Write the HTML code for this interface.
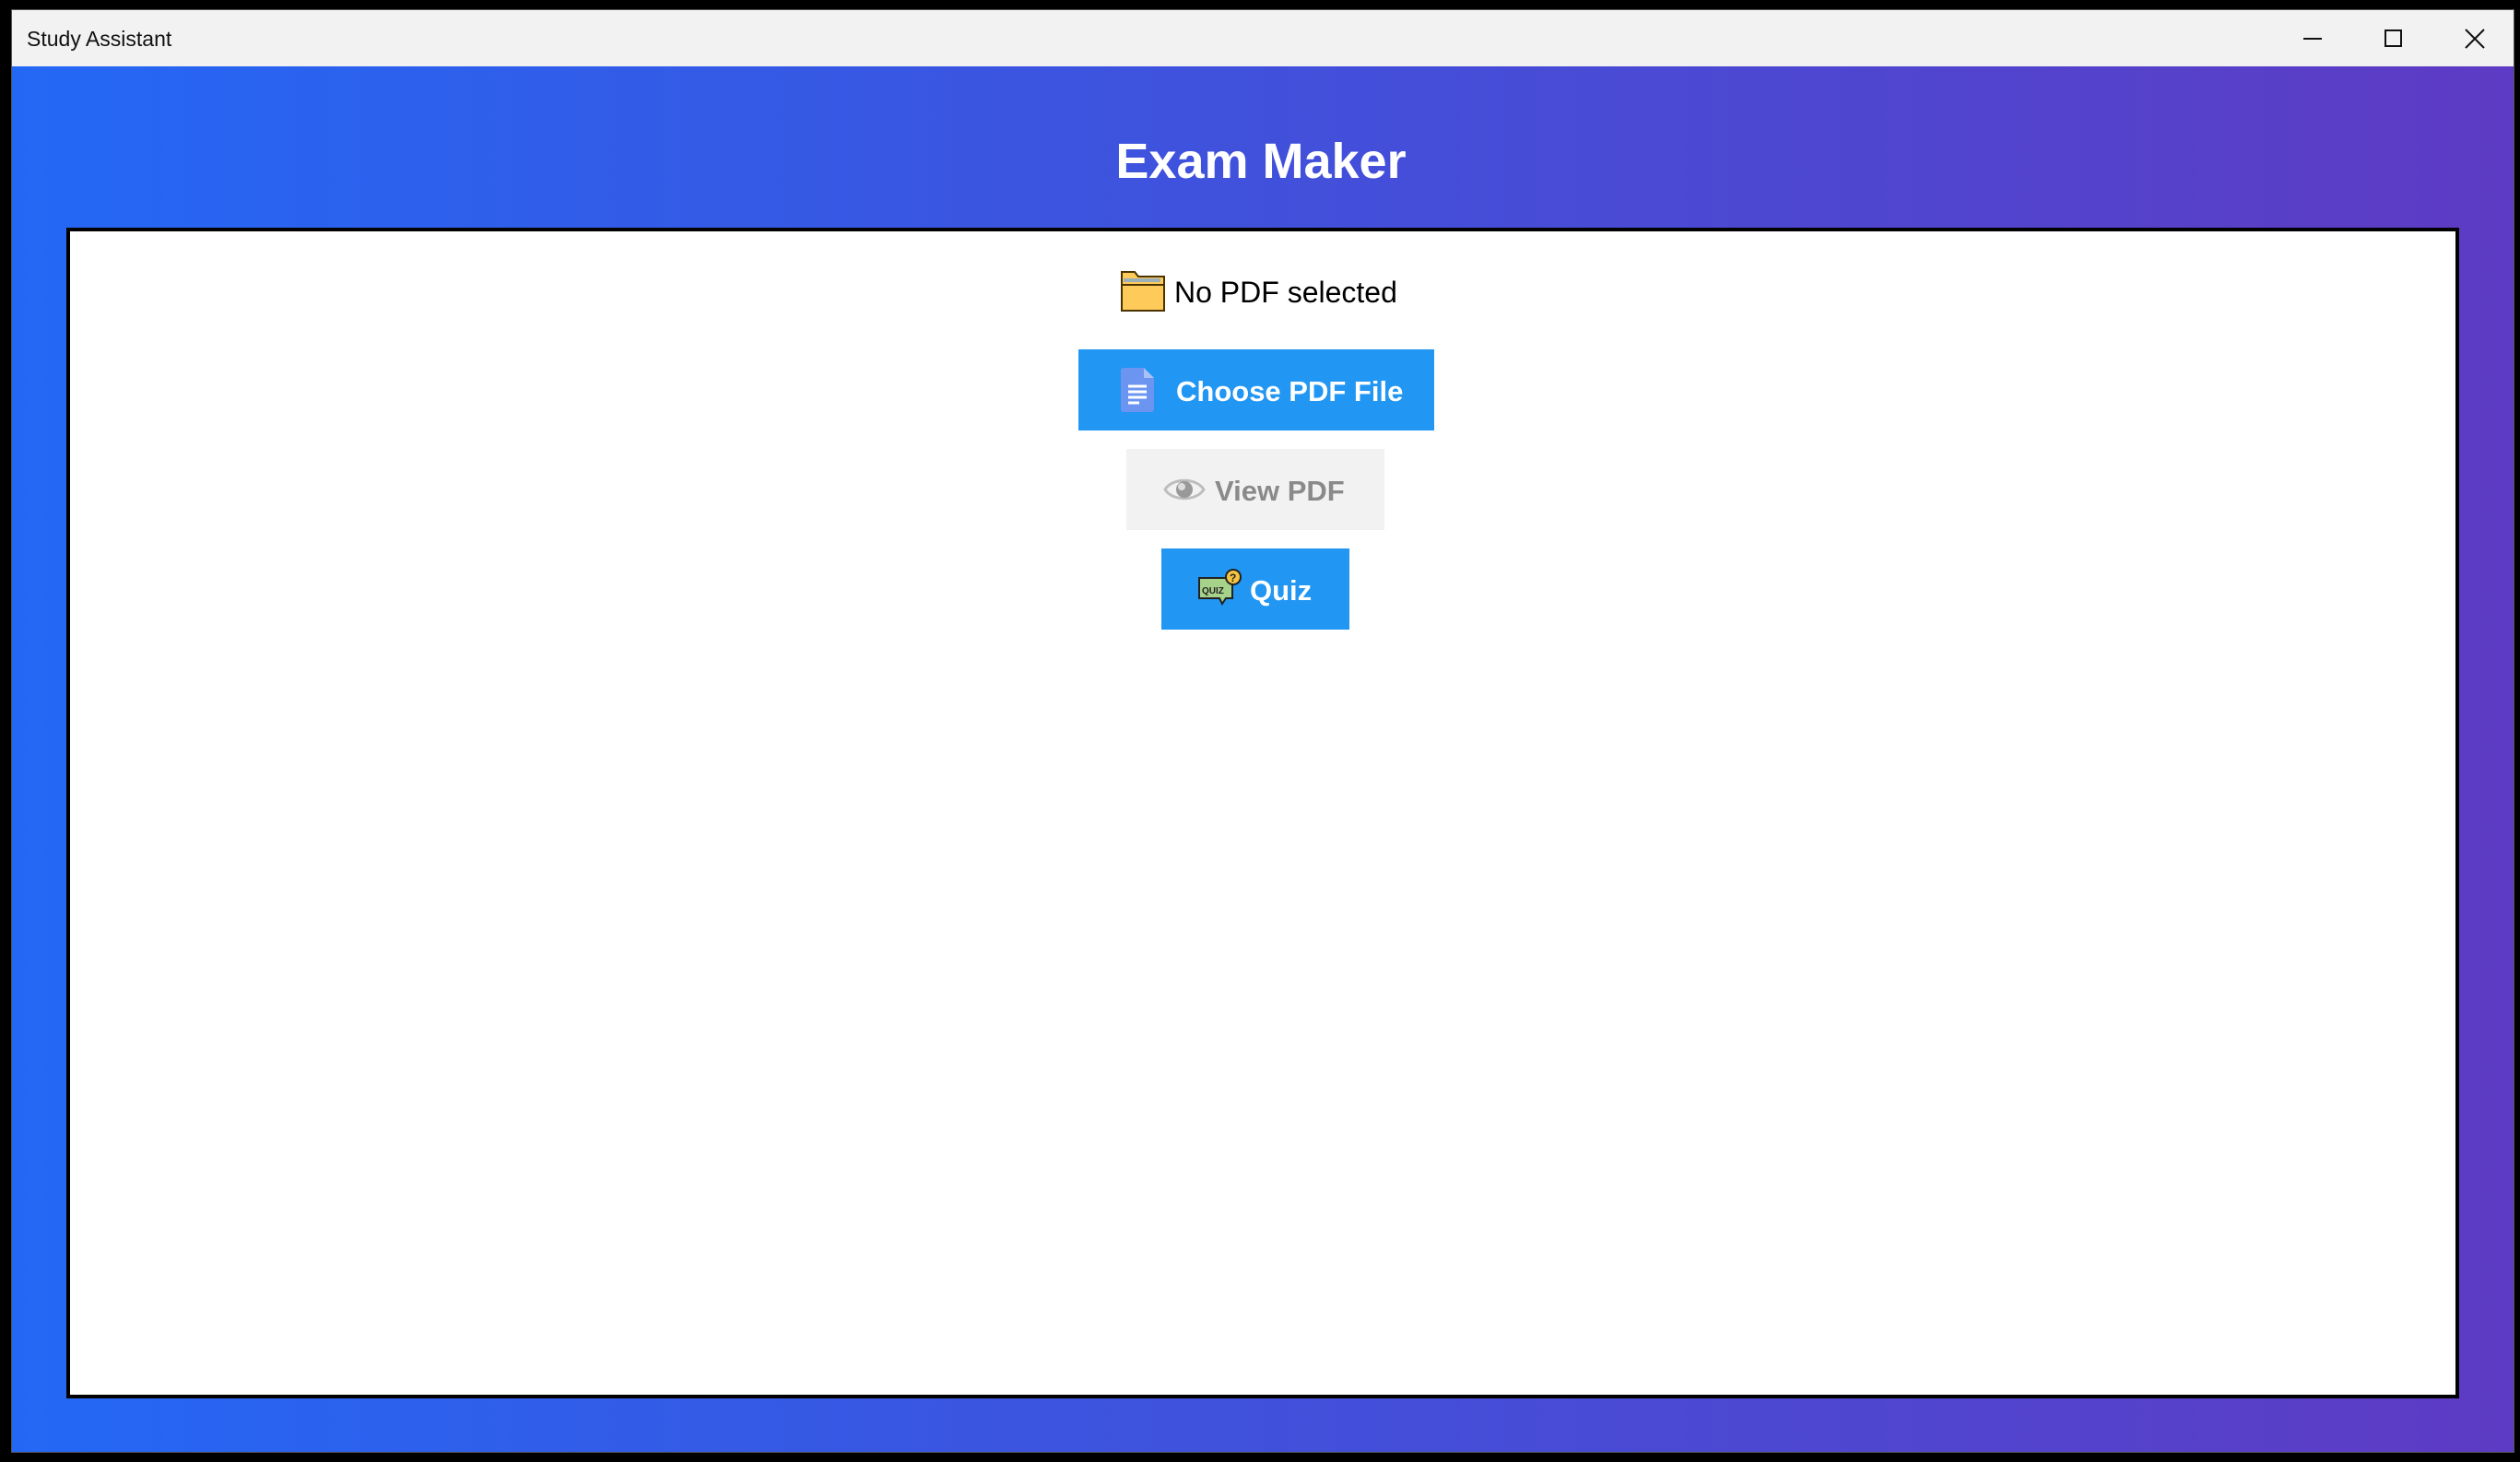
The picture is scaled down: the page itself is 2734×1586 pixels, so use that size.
<!DOCTYPE html>
<html><head><meta charset="utf-8"><style>
*{margin:0;padding:0;box-sizing:border-box}
html,body{width:2734px;height:1586px;background:#000;overflow:hidden;font-family:"Liberation Sans",sans-serif}
.win{position:absolute;left:12px;top:10px;width:2716px;height:1566px;background:#f2f2f2;border:1px solid #555}
.tb{position:absolute;left:0;top:0;width:100%;height:61px;background:#f2f2f2}
.tt{position:absolute;left:16px;top:18px;font-size:23px;color:#111}
.content{position:absolute;left:0;top:61px;width:100%;bottom:0;background:linear-gradient(90deg,#2368f5 0%,#3b55e0 40%,#5e3bc4 100%)}
.h1{position:absolute;left:0;width:100%;top:72px;text-align:center;color:#fff;font-weight:bold;font-size:54px;padding-right:4px}
.abs{position:absolute}
.btn{position:absolute;display:flex;align-items:center;color:#fff;font-weight:bold;font-size:31px;background:#2196f3}
</style></head><body>
<div class="win">
 <div class="tb"><div class="tt">Study Assistant</div>
  <div class="abs" style="left:2486px;top:30px;width:20px;height:2px;background:#111"></div>
  <div class="abs" style="left:2574px;top:21px;width:19px;height:19px;border:2px solid #111"></div>
  <svg class="abs" style="left:2661px;top:20px" width="22" height="22"><path d="M1 1L21 21M21 1L1 21" stroke="#111" stroke-width="2"/></svg>
 </div>
 <div class="content">
  <div class="h1">Exam Maker</div>
 </div>
</div>
<div class="abs" style="left:72px;top:247px;width:2596px;height:1270px;background:#fff;border:4px solid #000"></div>
<svg class="abs" style="left:1216px;top:293px" width="48" height="45" viewBox="0 0 48 45"><path d="M1 2h14l4 5h28v37H1z" fill="#fecb5b" stroke="#4a3300" stroke-width="2"/><path d="M3 9h40v4H3z" fill="#9bb0b8"/><path d="M1 16h46v28H1z" fill="#fecb5b" stroke="#4a3300" stroke-width="2"/></svg>
<div class="abs" style="left:1274px;top:299px;font-size:32px;color:#000">No PDF selected</div>
<div class="btn" style="left:1170px;top:379px;width:386px;height:88px">
 <svg class="abs" style="left:46px;top:20px" width="36" height="48" viewBox="0 0 36 48"><path d="M3 0h22l11 11v34a3 3 0 0 1-3 3H3a3 3 0 0 1-3-3V3a3 3 0 0 1 3-3z" fill="#6b95f0"/><path d="M25 0l11 11H25z" fill="#a8c1f7"/><path d="M8 20h20M8 26h20M8 32h20M8 38h12" stroke="#fff" stroke-width="3"/></svg>
 <span class="abs" style="left:106px;top:28px">Choose PDF File</span>
</div>
<div class="btn" style="left:1222px;top:487px;width:280px;height:88px;background:#f2f2f2;color:#8a8a8a">
 <svg class="abs" style="left:40px;top:27px" width="46" height="34" viewBox="0 0 46 34"><path d="M2 17C10 4 36 4 44 17C36 30 10 30 2 17z" fill="none" stroke="#bdbdbd" stroke-width="3"/><circle cx="23" cy="17" r="9" fill="#999"/><circle cx="20" cy="14" r="4" fill="#ddd"/></svg>
 <span class="abs" style="left:96px;top:28px">View PDF</span>
</div>
<div class="btn" style="left:1260px;top:595px;width:204px;height:88px">
 <svg class="abs" style="left:40px;top:22px" width="50" height="46" viewBox="0 0 50 46"><path d="M1 10h36v22H30l-4 6-3-6H1z" fill="#a6d28a" stroke="#222" stroke-width="2"/><text x="4" y="27" font-size="10" font-family="Liberation Sans" fill="#222">QUIZ</text><circle cx="38" cy="9" r="8" fill="#f5c542" stroke="#222" stroke-width="2"/><text x="34" y="14" font-size="12" font-family="Liberation Sans" fill="#222">?</text></svg>
 <span class="abs" style="left:96px;top:28px">Quiz</span>
</div>
</body></html>
